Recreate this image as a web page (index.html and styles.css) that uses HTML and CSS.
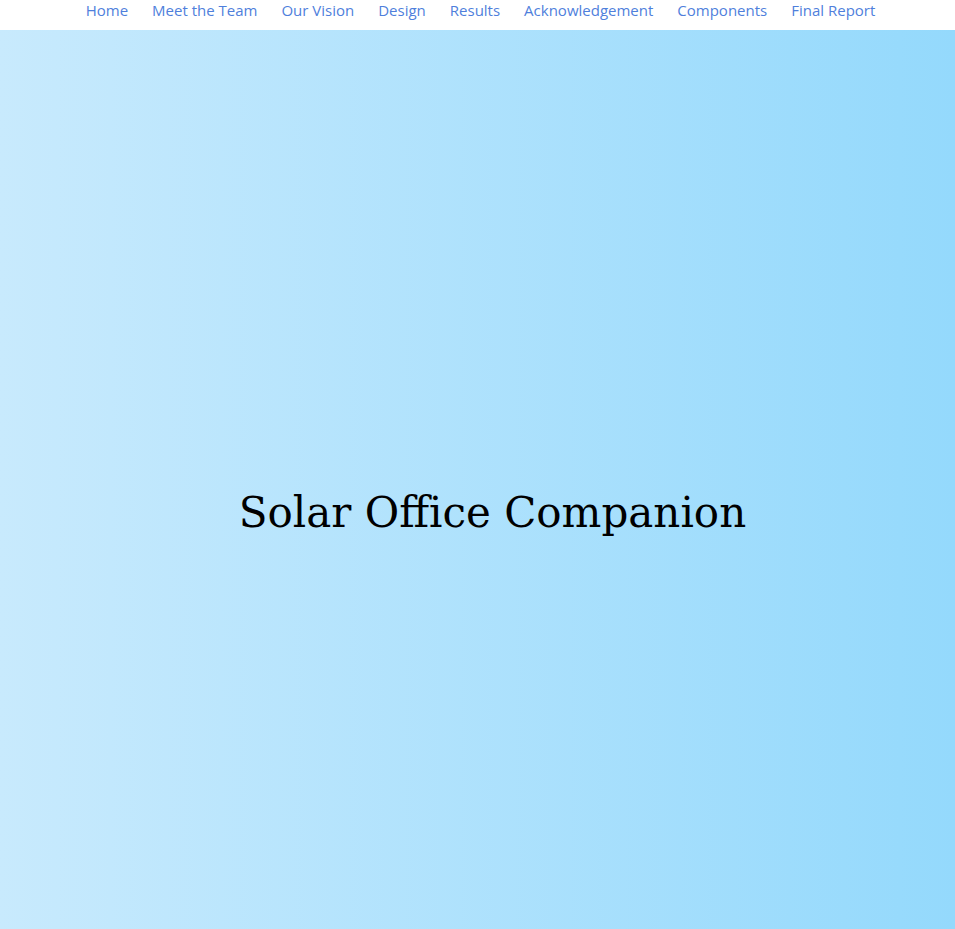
FILE: index.html
```html
<!DOCTYPE html>
<html>
<head>
<meta charset="utf-8">
<link rel="stylesheet" href="styles.css">
<title>Solar Office Companion</title>
</head>
<body>
<nav class="topnav">
  <a href="#">Home</a>
  <a href="#">Meet the Team</a>
  <a href="#">Our Vision</a>
  <a href="#">Design</a>
  <a href="#">Results</a>
  <a href="#">Acknowledgement</a>
  <a href="#">Components</a>
  <a href="#">Final Report</a>
</nav>
<section class="hero">
  <h1 class="hero-title">Solar Office Companion</h1>
</section>
</body>
</html>
```
FILE: styles.css
```css
html, body {
  margin: 0;
  padding: 0;
}
body {
  background: #ffffff;
  font-family: "Open Sans", "Noto Sans", sans-serif;
}
.topnav {
  height: 30px;
  box-sizing: border-box;
  display: flex;
  justify-content: center;
  align-items: flex-start;
  gap: 24px;
  padding-left: 6px;
  padding-top: 0;
  background: #ffffff;
}
.topnav a {
  color: #4f7fdc;
  text-decoration: none;
  font-size: 15px;
  line-height: 20px;
}
.hero {
  height: 899px;
  display: flex;
  justify-content: center;
  align-items: center;
  background: linear-gradient(to right, #c8eafd, #94d9fc);
}
.hero-title {
  margin: 66px 0 0 30px;
  font-family: "DejaVu Serif", "Liberation Serif", serif;
  font-weight: normal;
  font-size: 42px;
  color: #000000;
}
```
